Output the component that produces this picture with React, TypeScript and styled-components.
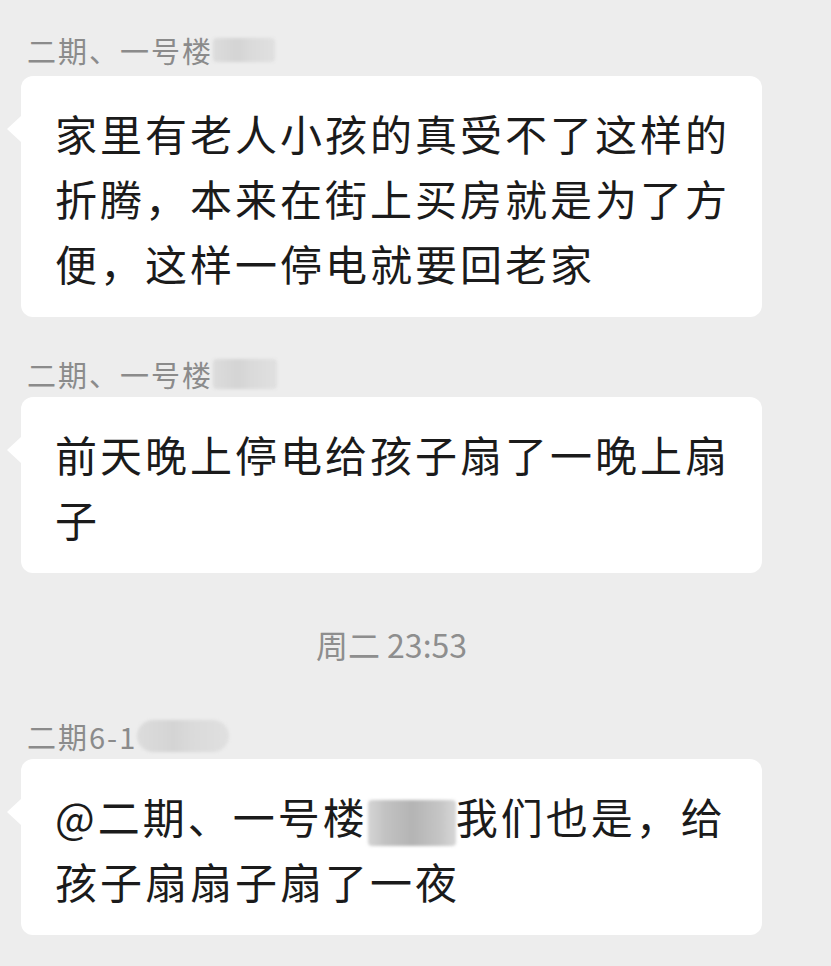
import React from 'react';
import styled, { createGlobalStyle } from 'styled-components';

const GlobalStyle = createGlobalStyle`
  html, body {
    margin: 0;
    padding: 0;
    background: #ededed;
  }
  body {
    font-family: "Noto Sans CJK SC", "Noto Sans", sans-serif;
    overflow: hidden;
  }
`;

const ChatView = styled.div`
  width: 831px;
  height: 966px;
  box-sizing: border-box;
  padding: 32px 69px 0 21px;
  display: flex;
  flex-direction: column;
  background: #ededed;
`;

const Message = styled.div<{ $gap?: number }>`
  display: flex;
  flex-direction: column;
  margin-top: ${p => p.$gap ?? 0}px;
`;

const Sender = styled.div<{ $space?: number }>`
  display: flex;
  align-items: center;
  height: 36px;
  padding-left: 6px;
  margin-bottom: ${p => p.$space ?? 6}px;
  font-size: 29px;
  letter-spacing: 2px;
  color: #8b8b8b;
  line-height: 36px;
  white-space: nowrap;
`;

const Masked = styled.span<{ $w: number; $h: number; $round?: boolean; $dark?: boolean }>`
  display: inline-block;
  width: ${p => p.$w}px;
  height: ${p => p.$h}px;
  border-radius: ${p => (p.$round ? p.$h / 2 : 4)}px;
  background: ${p =>
    p.$dark
      ? 'linear-gradient(90deg, #d4d4d4 0%, #c2c2c2 20%, #b4b4b4 50%, #c4c4c4 80%, #d6d6d6 100%)'
      : 'linear-gradient(90deg, #dcdcdc 0%, #d4d4d4 40%, #dadada 60%, #e0e0e0 100%)'};
  filter: blur(1.5px);
  vertical-align: middle;
`;

const Bubble = styled.div`
  position: relative;
  background: #ffffff;
  border-radius: 12px;
  padding: 24px 22px 22px 34px;
  font-size: 42px;
  letter-spacing: 3px;
  line-height: 65px;
  color: #1b1b1b;

  &::before {
    content: '';
    position: absolute;
    left: -14px;
    top: 40px;
    border-top: 13px solid transparent;
    border-bottom: 13px solid transparent;
    border-right: 14px solid #ffffff;
  }
`;

const Stamp = styled.div`
  align-self: center;
  margin-top: 51px;
  height: 40px;
  line-height: 40px;
  font-size: 32px;
  color: #8e8e8e;
`;

export default function App() {
  return (
    <>
      <GlobalStyle />
      <ChatView>
        <Message>
          <Sender $space={8}>
            二期、一号楼
            <Masked $w={62} $h={24} />
          </Sender>
          <Bubble>家里有老人小孩的真受不了这样的折腾，本来在街上买房就是为了方便，这样一停电就要回老家</Bubble>
        </Message>

        <Message $gap={39}>
          <Sender $space={5}>
            二期、一号楼
            <Masked $w={64} $h={30} />
          </Sender>
          <Bubble>前天晚上停电给孩子扇了一晚上扇子</Bubble>
        </Message>

        <Stamp>周二 23:53</Stamp>

        <Message $gap={54}>
          <Sender $space={5}>
            二期6-1
            <Masked $w={92} $h={32} $round />
          </Sender>
          <Bubble>
            @二期、一号楼
            <Masked $w={88} $h={46} $dark />
            我们也是，给孩子扇扇子扇了一夜
          </Bubble>
        </Message>
      </ChatView>
    </>
  );
}
